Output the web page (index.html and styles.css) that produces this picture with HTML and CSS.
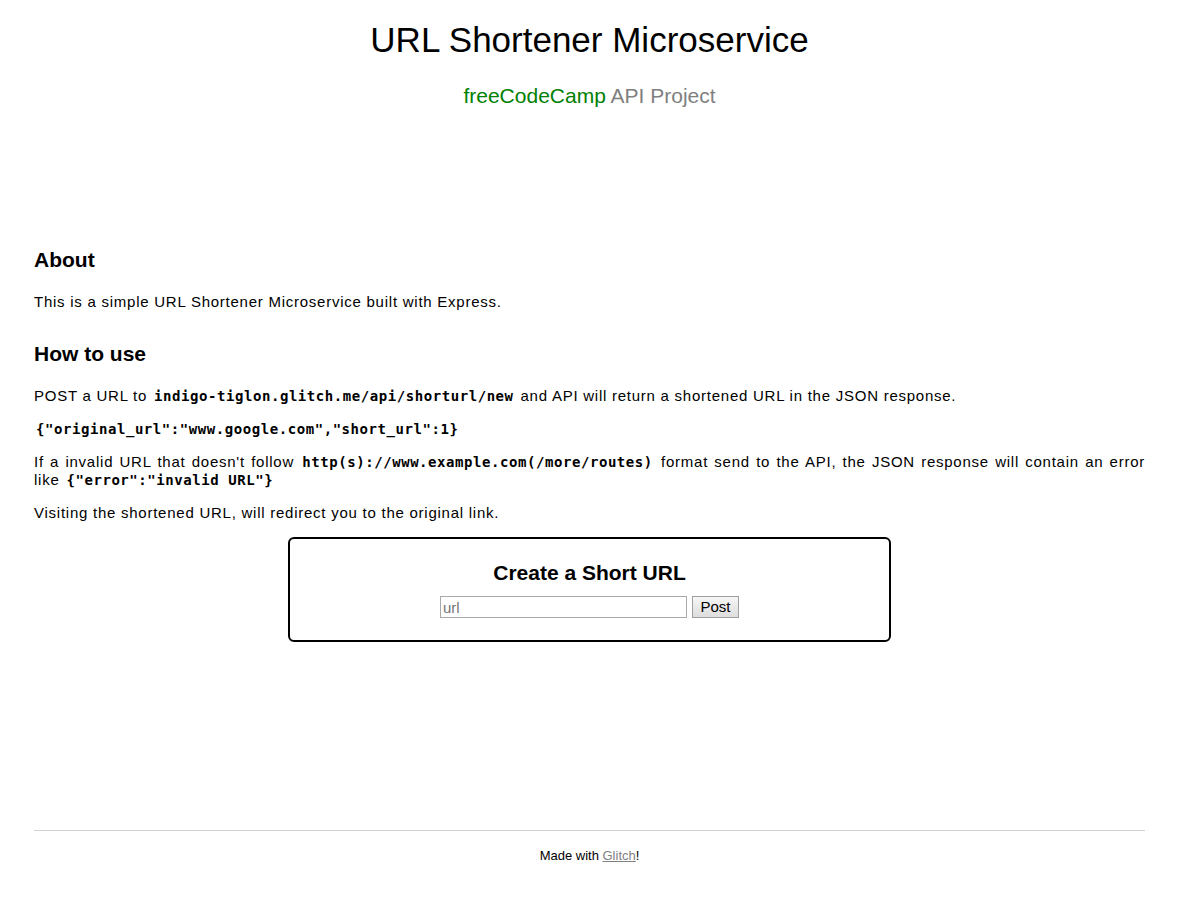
FILE: index.html
```html
<!DOCTYPE html>
<html lang="en">
<head>
<meta charset="utf-8">
<meta name="viewport" content="width=device-width, initial-scale=1">
<title>URL Shortener Microservice</title>
<link rel="stylesheet" href="styles.css">
</head>
<body class="page">
<header class="header">
<h1 class="title">URL Shortener Microservice</h1>
<p class="subtitle"><span class="brand">freeCodeCamp</span> API Project</p>
</header>
<main class="content">
<section class="docs">
<h2 class="heading">About</h2>
<p class="text">This is a simple URL Shortener Microservice built with Express.</p>
<h2 class="heading">How to use</h2>
<p class="text">POST a URL to <code class="code">indigo-tiglon.glitch.me/api/shorturl/new</code> and API will return a shortened URL in the JSON response.</p>
<p class="text"><code class="code">{"original_url":"www.google.com","short_url":1}</code></p>
<p class="text">If a invalid URL that doesn't follow <code class="code">http(s)://www.example.com(/more/routes)</code> format send to the API, the JSON response will contain an error like <code class="code">{"error":"invalid URL"}</code></p>
<p class="text">Visiting the shortened URL, will redirect you to the original link.</p>
</section>
<form class="card">
<h2 class="card-title">Create a Short URL</h2>
<div class="fields">
<input class="url" type="text" name="url" placeholder="url" aria-label="url">
<button class="post" type="submit">Post</button>
</div>
</form>
</main>
<footer class="footer">
<p class="credit">Made with <a class="link" href="#">Glitch</a>!</p>
</footer>
</body>
</html>
```
FILE: styles.css
```css
* {
  box-sizing: border-box;
}

.page {
  display: flex;
  flex-direction: column;
  min-height: 100vh;
  margin: 0;
  padding: 20px 32px 34px 34px;
  background: #fff;
  color: #000;
  font: 15px/18px "Liberation Sans", Arial, sans-serif;
}

.header {
  text-align: center;
}

.title {
  margin: 0;
  font-size: 35px;
  line-height: 40px;
  font-weight: 400;
}

.subtitle {
  margin: 24px 0 0;
  color: gray;
  font-size: 21px;
  line-height: 24px;
}

.brand {
  color: green;
}

.content {
  display: flex;
  flex: 1;
  flex-direction: column;
  justify-content: center;
  padding-bottom: 48px;
}

.heading {
  margin: 31px 0 21px;
  font-size: 21px;
  line-height: 24px;
}

.heading:first-child {
  margin-top: 0;
}

.text {
  margin: 0 0 15px;
  letter-spacing: 0.05em;
  text-align: justify;
}

.code {
  padding: 0 2px;
  font-family: "DejaVu Sans Mono", monospace;
  font-size: 14px;
  line-height: 14px;
  font-weight: 700;
  letter-spacing: 0.04em;
}

.card {
  width: 603px;
  max-width: 100%;
  align-self: center;
  padding: 22px 20px;
  border: 2px solid #000;
  border-radius: 6px;
  text-align: center;
}

.card-title {
  margin: 0 0 11px;
  font-size: 21px;
  line-height: 24px;
}

.fields {
  display: flex;
  justify-content: center;
  gap: 5px;
}

.url {
  width: 247px;
  min-width: 0;
  height: 22px;
  padding: 1px 2px;
  border: 1px solid #a9a9a9;
  font: inherit;
}

.url::placeholder {
  color: #757575;
}

.post {
  width: 47px;
  height: 22px;
  padding: 0;
  border: 1px solid #a0a0a0;
  background: linear-gradient(#f6f6f6, #dddddd);
  color: #000;
  font: inherit;
}

.footer {
  border-top: 1px solid #d3d3d3;
  padding-top: 16px;
  text-align: center;
}

.credit {
  margin: 0;
  font-size: 13px;
}

.link {
  color: gray;
}
```
